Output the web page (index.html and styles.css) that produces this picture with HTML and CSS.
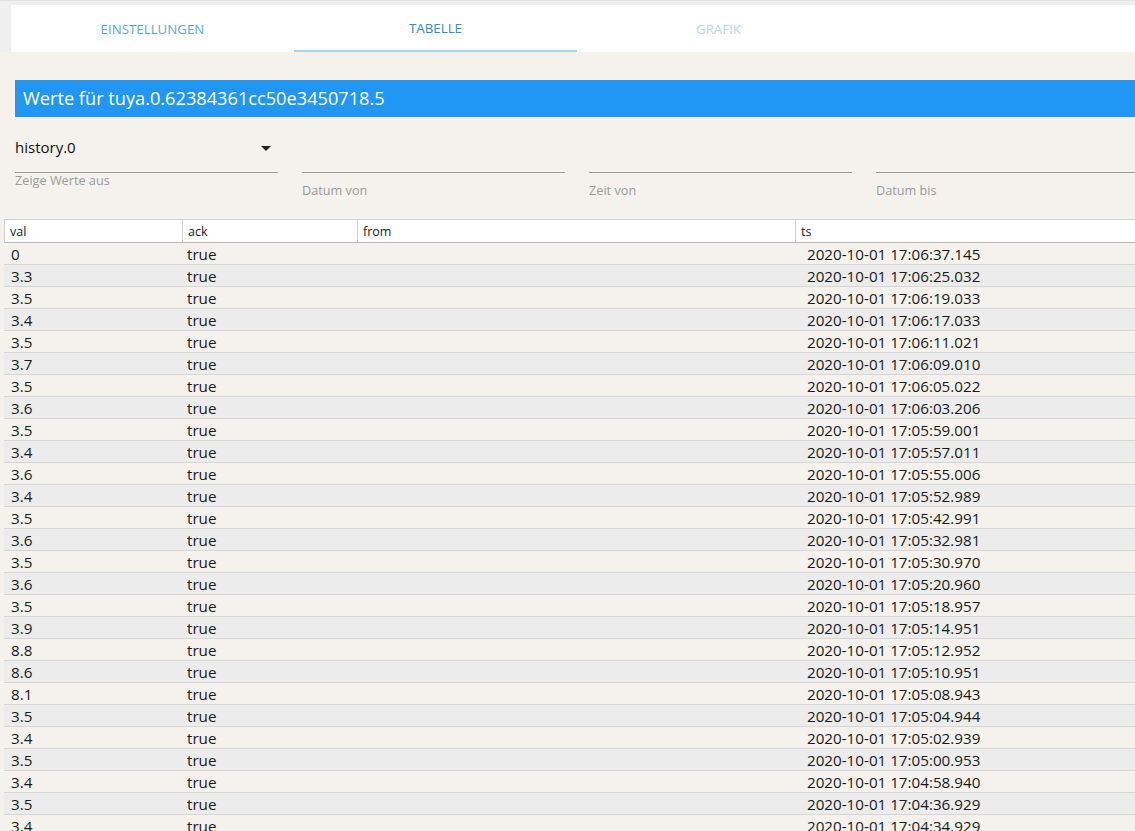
FILE: index.html
```html
<!DOCTYPE html>
<html>
<head>
<meta charset="utf-8">
<link rel="stylesheet" href="styles.css">
</head>
<body>
<div class="topbar">
  <div class="tabs">
    <div class="tab tab-a">EINSTELLUNGEN</div>
    <div class="tab tab-active">TABELLE</div>
    <div class="tab tab-dis">GRAFIK</div>
  </div>
</div>
<div class="content">
  <div class="title">Werte für tuya.0.62384361cc50e3450718.5</div>
  <div class="fields">
    <div class="field">
      <div class="input select"><span>history.0</span><span class="caret"></span></div>
      <div class="label label-sel">Zeige Werte aus</div>
    </div>
    <div class="field">
      <div class="input"></div>
      <div class="label">Datum von</div>
    </div>
    <div class="field">
      <div class="input"></div>
      <div class="label">Zeit von</div>
    </div>
    <div class="field field-last">
      <div class="input"></div>
      <div class="label">Datum bis</div>
    </div>
  </div>
</div>
<div class="table">
  <div class="row head">
    <div class="c c1">val</div><div class="c c2">ack</div><div class="c c3">from</div><div class="c c4">ts</div>
  </div>
  <div class="body" id="body">
    <div class="row"><div class="c c1">0</div><div class="c c2">true</div><div class="c c3"></div><div class="c c4">2020-10-01 17:06:37.145</div></div>
    <div class="row"><div class="c c1">3.3</div><div class="c c2">true</div><div class="c c3"></div><div class="c c4">2020-10-01 17:06:25.032</div></div>
    <div class="row"><div class="c c1">3.5</div><div class="c c2">true</div><div class="c c3"></div><div class="c c4">2020-10-01 17:06:19.033</div></div>
    <div class="row"><div class="c c1">3.4</div><div class="c c2">true</div><div class="c c3"></div><div class="c c4">2020-10-01 17:06:17.033</div></div>
    <div class="row"><div class="c c1">3.5</div><div class="c c2">true</div><div class="c c3"></div><div class="c c4">2020-10-01 17:06:11.021</div></div>
    <div class="row"><div class="c c1">3.7</div><div class="c c2">true</div><div class="c c3"></div><div class="c c4">2020-10-01 17:06:09.010</div></div>
    <div class="row"><div class="c c1">3.5</div><div class="c c2">true</div><div class="c c3"></div><div class="c c4">2020-10-01 17:06:05.022</div></div>
    <div class="row"><div class="c c1">3.6</div><div class="c c2">true</div><div class="c c3"></div><div class="c c4">2020-10-01 17:06:03.206</div></div>
    <div class="row"><div class="c c1">3.5</div><div class="c c2">true</div><div class="c c3"></div><div class="c c4">2020-10-01 17:05:59.001</div></div>
    <div class="row"><div class="c c1">3.4</div><div class="c c2">true</div><div class="c c3"></div><div class="c c4">2020-10-01 17:05:57.011</div></div>
    <div class="row"><div class="c c1">3.6</div><div class="c c2">true</div><div class="c c3"></div><div class="c c4">2020-10-01 17:05:55.006</div></div>
    <div class="row"><div class="c c1">3.4</div><div class="c c2">true</div><div class="c c3"></div><div class="c c4">2020-10-01 17:05:52.989</div></div>
    <div class="row"><div class="c c1">3.5</div><div class="c c2">true</div><div class="c c3"></div><div class="c c4">2020-10-01 17:05:42.991</div></div>
    <div class="row"><div class="c c1">3.6</div><div class="c c2">true</div><div class="c c3"></div><div class="c c4">2020-10-01 17:05:32.981</div></div>
    <div class="row"><div class="c c1">3.5</div><div class="c c2">true</div><div class="c c3"></div><div class="c c4">2020-10-01 17:05:30.970</div></div>
    <div class="row"><div class="c c1">3.6</div><div class="c c2">true</div><div class="c c3"></div><div class="c c4">2020-10-01 17:05:20.960</div></div>
    <div class="row"><div class="c c1">3.5</div><div class="c c2">true</div><div class="c c3"></div><div class="c c4">2020-10-01 17:05:18.957</div></div>
    <div class="row"><div class="c c1">3.9</div><div class="c c2">true</div><div class="c c3"></div><div class="c c4">2020-10-01 17:05:14.951</div></div>
    <div class="row"><div class="c c1">8.8</div><div class="c c2">true</div><div class="c c3"></div><div class="c c4">2020-10-01 17:05:12.952</div></div>
    <div class="row"><div class="c c1">8.6</div><div class="c c2">true</div><div class="c c3"></div><div class="c c4">2020-10-01 17:05:10.951</div></div>
    <div class="row"><div class="c c1">8.1</div><div class="c c2">true</div><div class="c c3"></div><div class="c c4">2020-10-01 17:05:08.943</div></div>
    <div class="row"><div class="c c1">3.5</div><div class="c c2">true</div><div class="c c3"></div><div class="c c4">2020-10-01 17:05:04.944</div></div>
    <div class="row"><div class="c c1">3.4</div><div class="c c2">true</div><div class="c c3"></div><div class="c c4">2020-10-01 17:05:02.939</div></div>
    <div class="row"><div class="c c1">3.5</div><div class="c c2">true</div><div class="c c3"></div><div class="c c4">2020-10-01 17:05:00.953</div></div>
    <div class="row"><div class="c c1">3.4</div><div class="c c2">true</div><div class="c c3"></div><div class="c c4">2020-10-01 17:04:58.940</div></div>
    <div class="row"><div class="c c1">3.5</div><div class="c c2">true</div><div class="c c3"></div><div class="c c4">2020-10-01 17:04:36.929</div></div>
    <div class="row"><div class="c c1">3.4</div><div class="c c2">true</div><div class="c c3"></div><div class="c c4">2020-10-01 17:04:34.929</div></div>
  </div>
</div>
</body>
</html>
```
FILE: styles.css
```css
* { box-sizing: border-box; }
html, body { margin: 0; padding: 0; }
body {
  background: #f5f2ee;
  font-family: "Open Sans", "Noto Sans", sans-serif;
  color: #1a1a1a;
  width: 1135px;
  height: 831px;
  overflow: hidden;
}
.topbar {
  background: #efefef;
  padding: 4px 0 0 11px;
  border-top: 1px solid #e2e2e2;
}
.tabs {
  display: flex;
  background: #fff;
  height: 47px;
}
.tab {
  width: 283px;
  display: flex;
  align-items: center;
  justify-content: center;
  font-size: 13.3px;
  padding-top: 1px;
}
.tab-a { color: #5fa8d6; }
.tab-active { color: #2f8fcf; border-bottom: 2px solid #a8d6f0; }
.tab-dis { color: #b9d6ea; }
.content {
  padding: 28px 0 0 15px;
}
.title {
  background: #2196f3;
  color: #fff;
  height: 37px;
  font-size: 18.2px;
  line-height: 37px;
  padding-left: 8px;
}
.fields {
  display: flex;
  gap: 24px;
  margin-top: 17px;
  height: 85px;
}
.field { width: 263px; }
.field-last { width: 260px; flex: 1; }
.input {
  height: 39px;
  border-bottom: 1px solid #9a9a9a;
  font-size: 15px;
  display: flex;
  align-items: flex-start;
  justify-content: space-between;
  padding-top: 3px;
}
.select span:first-child { color: #111; }
.caret {
  width: 0; height: 0;
  border-left: 5px solid transparent;
  border-right: 5px solid transparent;
  border-top: 5px solid #222;
  margin-right: 7px;
  margin-top: 9px;
}
.label {
  font-size: 12.7px;
  color: #9a9a9a;
  margin-top: 8px;
}
.label-sel { margin-top: -2px; }
.table {
  margin-left: 4px;
}
.row {
  display: flex;
  height: 22px;
  border-bottom: 1px solid #d6d6d6;
  align-items: center;
}
.head {
  background: #fff;
  border-top: 1px solid #cfcfcf;
  border-left: 1px solid #cfcfcf;
  border-bottom: 1px solid #b8b8b8;
  height: 24px;
  font-size: 12.5px;
}
.head .c { border-right: 1px solid #d0d0d0; height: 100%; display: flex; align-items: center; }
.c { white-space: nowrap; }
.c1 { width: 178px; padding-left: 5px; }
.c2 { width: 175px; padding-left: 5px; }
.c3 { width: 438px; padding-left: 5px; }
.c4 { flex: 1; padding-left: 5px; }
.head .c4 { border-right: none; }
.body .row { font-size: 15.2px; }
.body .row .c1 { padding-left: 7px; }
.body .row .c4 { padding-left: 12px; }
.body .row:nth-child(even) { background: #ececec; }
.body .row:nth-child(odd) { background: #f5f2ee; }
```
